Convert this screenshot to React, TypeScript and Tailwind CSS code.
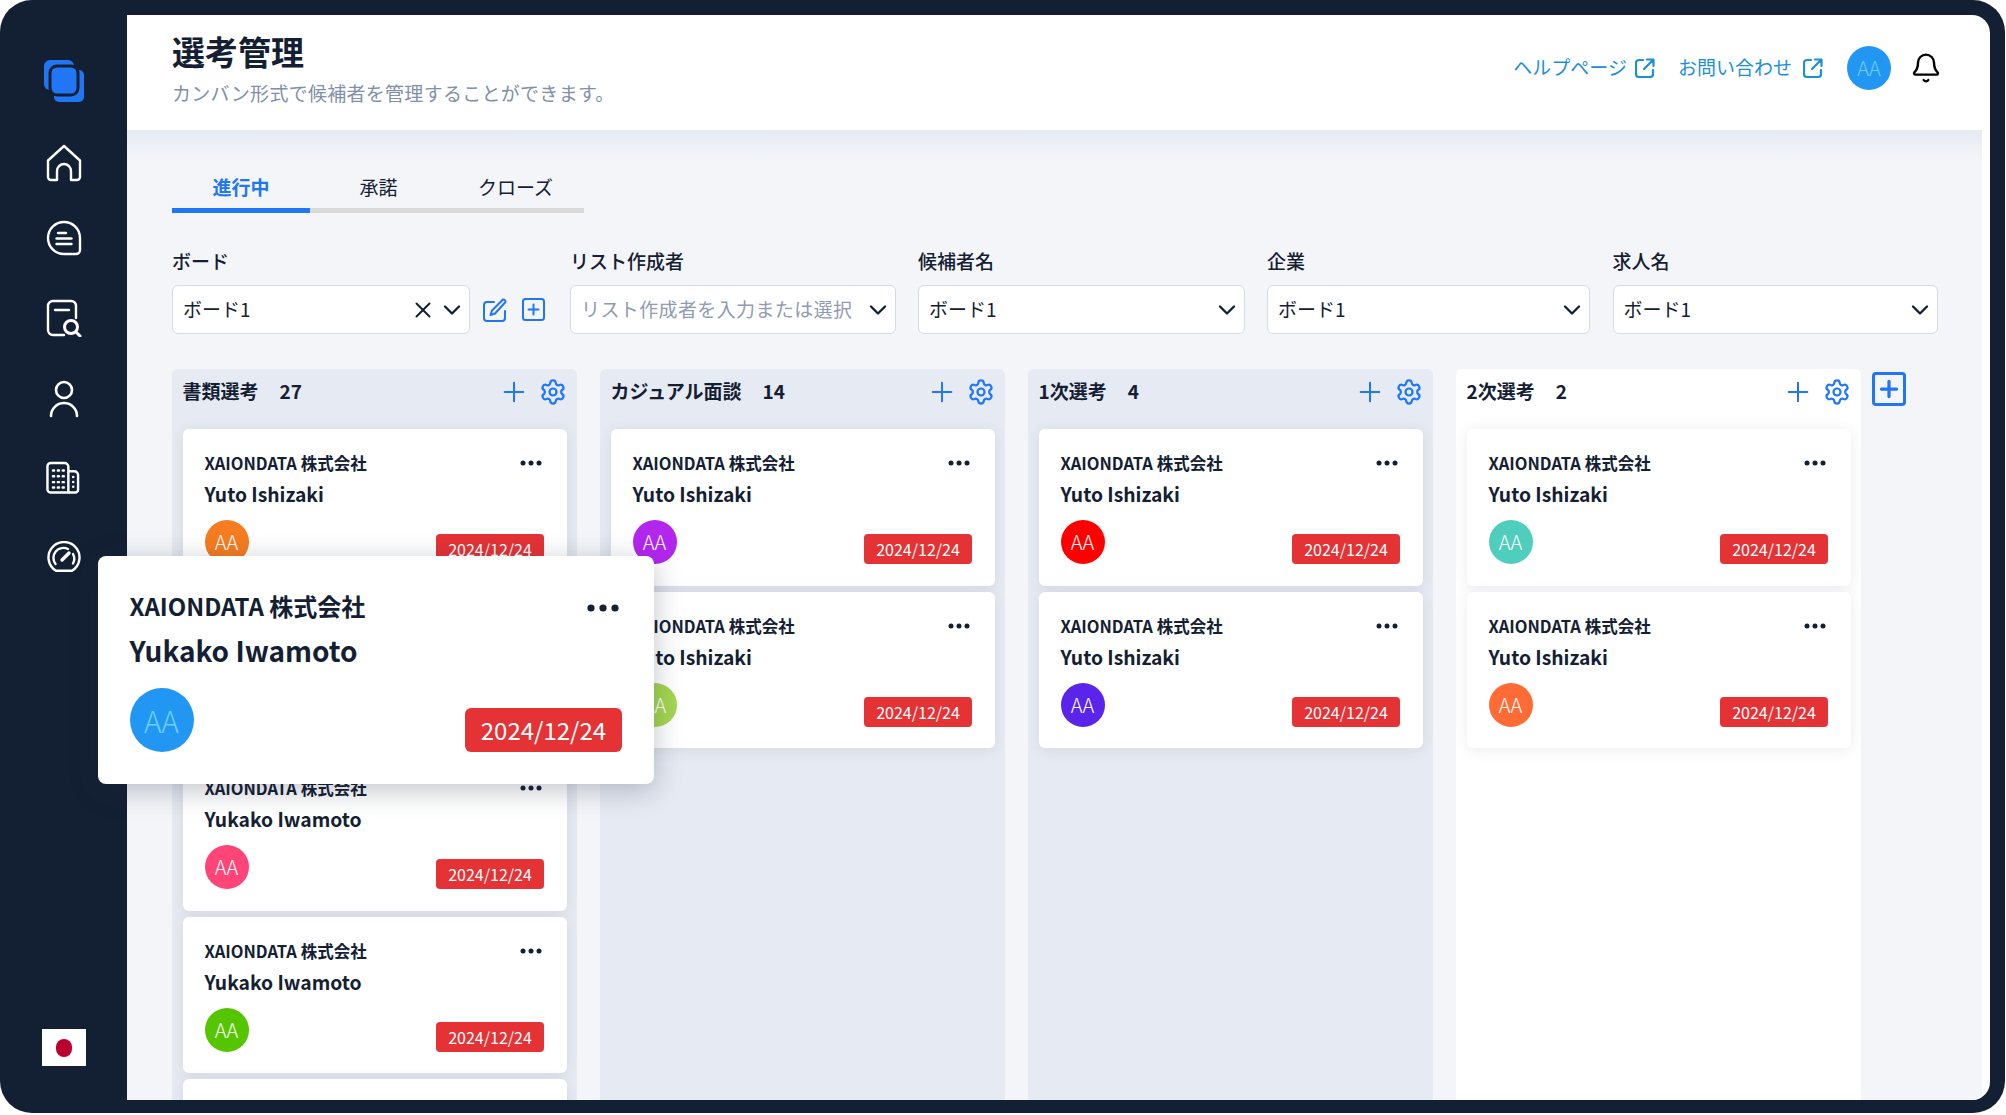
import { ChevronDown, X, Plus, Settings, Bell } from "lucide-react";

const FONT = "font-['Noto_Sans_CJK_JP','Noto_Sans',sans-serif]";

function Logo() {
  return (
    <svg width="40" height="42" viewBox="0 0 40 42" fill="none">
      <rect x="0" y="0" width="30" height="30" rx="6" fill="#2176f5" />
      <rect x="10" y="10" width="30" height="32" rx="5" fill="#2176f5" />
      <rect x="6" y="6" width="28" height="29" rx="7" fill="#2176f5" stroke="#132033" strokeWidth="3" />
    </svg>
  );
}

function HomeIcon() {
  return (
    <svg width="36" height="38" viewBox="0 0 36 38" fill="none" stroke="#fff" strokeWidth="2.4" strokeLinejoin="round">
      <path d="M2 16.5 L18 2 L34 16.5 V33 a3 3 0 0 1 -3 3 H25 V27 a7 7 0 0 0 -14 0 V36 H5 a3 3 0 0 1 -3 -3 Z" />
    </svg>
  );
}

function DocIcon() {
  return (
    <svg width="36" height="36" viewBox="0 0 36 36" fill="none" stroke="#fff" strokeWidth="2.4" strokeLinecap="round">
      <path d="M18 2 a16 16 0 0 1 16 16 V30 a4 4 0 0 1 -4 4 H18 a16 16 0 0 1 0 -32 Z" />
      <path d="M12 13 H20 M10.5 18.5 H25.5 M10.5 24 H25.5" />
    </svg>
  );
}

function SearchDocIcon() {
  return (
    <svg width="36" height="38" viewBox="0 0 36 38" fill="none" stroke="#fff" strokeWidth="2.4" strokeLinecap="round">
      <path d="M18 36 H7 a5 5 0 0 1 -5 -5 V7 a5 5 0 0 1 5 -5 H25 a5 5 0 0 1 5 5 V19" />
      <path d="M9 11 H23" />
      <circle cx="25" cy="28" r="6.5" strokeWidth="3" />
      <path d="M30 33 L34 37" strokeWidth="3" />
    </svg>
  );
}

function PersonIcon() {
  return (
    <svg width="30" height="38" viewBox="0 0 30 38" fill="none" stroke="#fff" strokeWidth="2.6" strokeLinecap="round">
      <circle cx="15" cy="10" r="8" />
      <path d="M2 36 a13 13 0 0 1 26 0" />
    </svg>
  );
}

function BuildingIcon() {
  return (
    <svg width="35" height="34" viewBox="0 0 36 34" fill="none" stroke="#fff" strokeWidth="2.5" strokeLinejoin="round">
      <path d="M23 32 H5 a3.5 3.5 0 0 1 -3.5 -3.5 V5 a3.5 3.5 0 0 1 3.5 -3.5 H19 a4 4 0 0 1 4 4 V32 Z" />
      <path d="M23 10 H29 a4 4 0 0 1 4 4 V29 a3 3 0 0 1 -3 3 H23" />
      <g fill="#fff" stroke="none">
        <rect x="6" y="8" width="3.5" height="2.5" rx="1" />
        <rect x="11" y="8" width="3.5" height="2.5" rx="1" />
        <rect x="16" y="8" width="3.5" height="2.5" rx="1" />
        <rect x="6" y="14" width="3.5" height="2.5" rx="1" />
        <rect x="11" y="14" width="3.5" height="2.5" rx="1" />
        <rect x="16" y="14" width="3.5" height="2.5" rx="1" />
        <rect x="6" y="20" width="3.5" height="2.5" rx="1" />
        <rect x="11" y="20" width="3.5" height="2.5" rx="1" />
        <rect x="16" y="20" width="3.5" height="2.5" rx="1" />
        <rect x="6" y="25.5" width="3.5" height="2.5" rx="1" />
        <rect x="11" y="25.5" width="3.5" height="2.5" rx="1" />
        <rect x="16" y="25.5" width="3.5" height="2.5" rx="1" />
        <circle cx="28" cy="16" r="1.3" />
        <circle cx="28" cy="21" r="1.3" />
        <circle cx="28" cy="26" r="1.3" />
      </g>
    </svg>
  );
}

function GaugeIcon() {
  return (
    <svg width="36" height="32" viewBox="0 0 36 32" fill="none" stroke="#fff" strokeWidth="2.4" strokeLinecap="round" strokeLinejoin="round">
      <path d="M10 29.8 a15.5 15.5 0 1 1 16 0 Z" />
      <path d="M9.5 23 a10 10 0 0 1 12.5 -15 M27 13 a10 10 0 0 1 0 9.5" />
      <path d="M16 19 L23 12" strokeWidth="3.4" />
    </svg>
  );
}

function PenSquare() {
  return (
    <svg width="24" height="24" viewBox="0 0 24 24" fill="none" stroke="#2176f5" strokeWidth="2" strokeLinecap="round" strokeLinejoin="round">
      <path d="M11 4 H4 a3 3 0 0 0 -3 3 V20 a3 3 0 0 0 3 3 H19 a3 3 0 0 0 3 -3 V13" />
      <path d="M20 1.5 a2.3 2.3 0 0 1 2.5 2.5 L12 15.5 L7.5 17 L9 12.5 Z" />
    </svg>
  );
}

function PlusSquare() {
  return (
    <svg width="23" height="23" viewBox="0 0 23 23" fill="none" stroke="#2176f5" strokeWidth="2" strokeLinecap="round">
      <rect x="1" y="1" width="21" height="21" rx="2.5" />
      <path d="M11.5 6.5 V16.5 M6.5 11.5 H16.5" />
    </svg>
  );
}

function ExternalIcon() {
  return (
    <svg width="20" height="20" viewBox="0 0 20 20" fill="none" stroke="#1c8fd9" strokeWidth="2.2" strokeLinecap="round" strokeLinejoin="round">
      <path d="M8 2 H4 a3 3 0 0 0 -3 3 V16 a3 3 0 0 0 3 3 H15 a3 3 0 0 0 3 -3 V12" />
      <path d="M12 1.5 H18.5 V8 M18 2 L9 11" />
    </svg>
  );
}

function Dots({ big }: { big?: boolean }) {
  return big ? (
    <svg width="32" height="8" viewBox="0 0 32 8" fill="#132033">
      <circle cx="4" cy="4" r="3.6" />
      <circle cx="16" cy="4" r="3.6" />
      <circle cx="28" cy="4" r="3.6" />
    </svg>
  ) : (
    <svg width="22" height="6" viewBox="0 0 22 6" fill="#132033">
      <circle cx="3" cy="3" r="2.5" />
      <circle cx="11" cy="3" r="2.5" />
      <circle cx="19" cy="3" r="2.5" />
    </svg>
  );
}

type CardData = { name: string; color: string };

function Card({ name, color }: CardData) {
  return (
    <div className="h-[156.5px] shrink-0 rounded-[6px] bg-white pt-[23px] pl-[22px] pr-[22.5px] shadow-[0_2px_14px_rgba(60,72,100,0.1)]">
      <div className="flex h-[22px] items-center justify-between pr-[2px]">
        <span className="text-[16.5px] leading-[22px] font-semibold">XAIONDATA 株式会社</span>
        <Dots />
      </div>
      <div className="mt-[5px] h-[30px] text-[19.3px] leading-[30px] font-semibold">{name}</div>
      <div className="mt-[11px] flex items-end justify-between">
        <div className="flex h-[44px] w-[44px] items-center justify-center rounded-full text-[20px] font-light text-white" style={{ backgroundColor: color }}>
          AA
        </div>
        <div className="flex h-[30px] w-[108px] items-center justify-center rounded-[4px] bg-[#e53235] text-[16px] text-white">2024/12/24</div>
      </div>
    </div>
  );
}

const columns: { title: string; count: string; white?: boolean; cards: CardData[] }[] = [
  {
    title: "書類選考",
    count: "27",
    cards: [
      { name: "Yuto Ishizaki", color: "#f57c20" },
      { name: "Yukako Iwamoto", color: "#2196f3" },
      { name: "Yukako Iwamoto", color: "#ff4478" },
      { name: "Yukako Iwamoto", color: "#55c500" },
      { name: "Yukako Iwamoto", color: "#2196f3" },
    ],
  },
  {
    title: "カジュアル面談",
    count: "14",
    cards: [
      { name: "Yuto Ishizaki", color: "#b326ee" },
      { name: "Yuto Ishizaki", color: "#a4d651" },
    ],
  },
  {
    title: "1次選考",
    count: "4",
    cards: [
      { name: "Yuto Ishizaki", color: "#ff0000" },
      { name: "Yuto Ishizaki", color: "#5a24ea" },
    ],
  },
  {
    title: "2次選考",
    count: "2",
    white: true,
    cards: [
      { name: "Yuto Ishizaki", color: "#4fcdbd" },
      { name: "Yuto Ishizaki", color: "#ff6b35" },
    ],
  },
];

function Select({ value, placeholder, clear }: { value: string; placeholder?: boolean; clear?: boolean }) {
  return (
    <div className="flex h-[49px] w-full items-center rounded-[6px] border border-[#d3dbe9] bg-white pl-[10px] pr-[3px]">
      <span className={`flex-1 truncate text-[19px] ${placeholder ? "tracking-[0.02em] text-[#8f9bb0]" : "text-[#132033]"}`}>{value}</span>
      {clear && <X size={26} strokeWidth={1.8} className="mr-[2px] text-[#132033]" />}
      <ChevronDown size={28} strokeWidth={2} className="text-[#132033]" />
    </div>
  );
}

function Filter({ label, width, children }: { label: string; width: string; children: React.ReactNode }) {
  return (
    <div className={width}>
      <div className="-mt-[1px] h-[24px] text-[19px] leading-[24px] font-medium">{label}</div>
      <div className="mt-[12px]">{children}</div>
    </div>
  );
}

export default function App() {
  return (
    <div className={`relative h-[1115px] w-[2006px] overflow-hidden bg-white text-[#132033] ${FONT}`}>
      <div className="flex h-[1113px] w-[2005px] rounded-[32px] bg-[#132033] pr-[15px]">
        <aside className="flex w-[127px] shrink-0 flex-col items-center pt-[60px] pb-[47px]">
          <Logo />
          <div className="mt-[42px]"><HomeIcon /></div>
          <div className="mt-[38px]"><DocIcon /></div>
          <div className="mt-[43px]"><SearchDocIcon /></div>
          <div className="mt-[43px]"><PersonIcon /></div>
          <div className="mt-[43px]"><BuildingIcon /></div>
          <div className="mt-[46px]"><GaugeIcon /></div>
          <div className="mt-auto flex h-[37px] w-[44px] items-center justify-center bg-white">
            <div className="h-[18px] w-[16px] rounded-full bg-[#bc002d]" />
          </div>
        </aside>

        <main className="mt-[15px] mb-[13px] flex min-w-0 flex-1 flex-col overflow-hidden rounded-r-[18px] bg-white">
          <header className="flex h-[115px] shrink-0 items-start justify-between pl-[45px] pr-[48px]">
            <div>
              <h1 className="mt-[17px] text-[33px] leading-[38px] font-bold">選考管理</h1>
              <p className="mt-[10px] text-[19px] leading-[26px] tracking-[0.015em] text-[#8090a8]">カンバン形式で候補者を管理することができます。</p>
            </div>
            <div className="mt-[31px] flex items-center">
              <span className="pb-[2px] text-[19px] text-[#1c8fd9]">ヘルプページ</span>
              <span className="ml-[8px]"><ExternalIcon /></span>
              <span className="ml-[23px] pb-[2px] text-[19px] text-[#1c8fd9]">お問い合わせ</span>
              <span className="ml-[11px]"><ExternalIcon /></span>
              <div className="ml-[24px] flex h-[44px] w-[44px] items-center justify-center rounded-full bg-[#2196f3] text-[20px] font-light text-[#6cd0ff]">AA</div>
              <Bell size={32} strokeWidth={1.8} className="ml-[19px] text-black" />
            </div>
          </header>

          <div className="mr-[8px] flex min-h-0 flex-1 flex-col bg-[linear-gradient(180deg,#e6eaf2,#f3f5f9_30px)] pl-[45px] pr-[44px]">
            <div className="mt-[36px] flex h-[47px] w-[412px] shrink-0 border-b-[5px] border-[#d9d9d9]">
              <div className="-mb-[5px] flex w-[138px] items-center justify-center border-b-[5px] border-[#2176f5] text-[19px] font-bold text-[#2176f5]">進行中</div>
              <div className="flex w-[137px] items-center justify-center text-[19px]">承諾</div>
              <div className="flex w-[137px] items-center justify-center text-[19px]">クローズ</div>
            </div>

            <div className="mt-[37px] flex shrink-0 gap-[22.5px]">
              <Filter label="ボード" width="w-[375.5px]">
                <div className="flex items-center">
                  <div className="w-[298px]"><Select value="ボード1" clear /></div>
                  <div className="ml-[13px]"><PenSquare /></div>
                  <div className="ml-[15px]"><PlusSquare /></div>
                </div>
              </Filter>
              <Filter label="リスト作成者" width="w-[325.5px]"><Select value="リスト作成者を入力または選択" placeholder /></Filter>
              <Filter label="候補者名" width="w-[326.5px]"><Select value="ボード1" /></Filter>
              <Filter label="企業" width="w-[323px]"><Select value="ボード1" /></Filter>
              <Filter label="求人名" width="w-[325.5px]"><Select value="ボード1" /></Filter>
            </div>

            <div className="mt-[35px] flex min-h-0 flex-1">
              <div className="flex min-h-0 gap-[23px]">
                {columns.map((col) => (
                  <section key={col.title} className={`flex w-[405px] flex-col overflow-hidden rounded-t-[6px] px-[10.5px] ${col.white ? "bg-white" : "bg-[#e6eaf2]"}`}>
                    <div className="flex h-[60px] shrink-0 items-center justify-between pb-[14px]">
                      <div className="flex items-center gap-[21px] pb-[1px] text-[19px] font-bold">
                        <span>{col.title}</span>
                        <span>{col.count}</span>
                      </div>
                      <div className="flex items-center gap-[9px]">
                        <Plus size={32} strokeWidth={1.5} className="text-[#2176f5]" />
                        <Settings size={28} strokeWidth={1.9} className="text-[#2176f5]" />
                      </div>
                    </div>
                    <div className="flex flex-col gap-[6px]">
                      {col.cards.map((c, i) => (
                        <Card key={i} {...c} />
                      ))}
                    </div>
                  </section>
                ))}
              </div>
              <div className="mt-[3px] ml-[11px] flex h-[34px] w-[34px] items-center justify-center rounded-[4px] border-[3px] border-[#2176f5]">
                <Plus size={26} strokeWidth={3} className="text-[#2176f5]" />
              </div>
            </div>
          </div>
        </main>
      </div>

      <div className="absolute top-[556px] left-[98px] h-[228px] w-[556px] rounded-[8px] bg-white pt-[34px] pl-[31.5px] pr-[32px] shadow-[0_6px_28px_rgba(30,40,60,0.28)]">
        <div className="flex h-[32px] items-center justify-between pr-[3px]">
          <span className="text-[24px] leading-[32px] font-semibold">XAIONDATA 株式会社</span>
          <span className="pt-[4px] leading-none"><Dots big /></span>
        </div>
        <div className="mt-[6px] h-[44px] text-[28px] leading-[44px] font-semibold">Yukako Iwamoto</div>
        <div className="mt-[16px] flex items-end justify-between">
          <div className="flex h-[64px] w-[64px] items-center justify-center rounded-full bg-[#2196f3] text-[30px] font-light text-[#6cd0ff]">AA</div>
          <div className="flex h-[44px] w-[157px] items-center justify-center rounded-[6px] bg-[#e53235] text-[24px] text-white">2024/12/24</div>
        </div>
      </div>
    </div>
  );
}
